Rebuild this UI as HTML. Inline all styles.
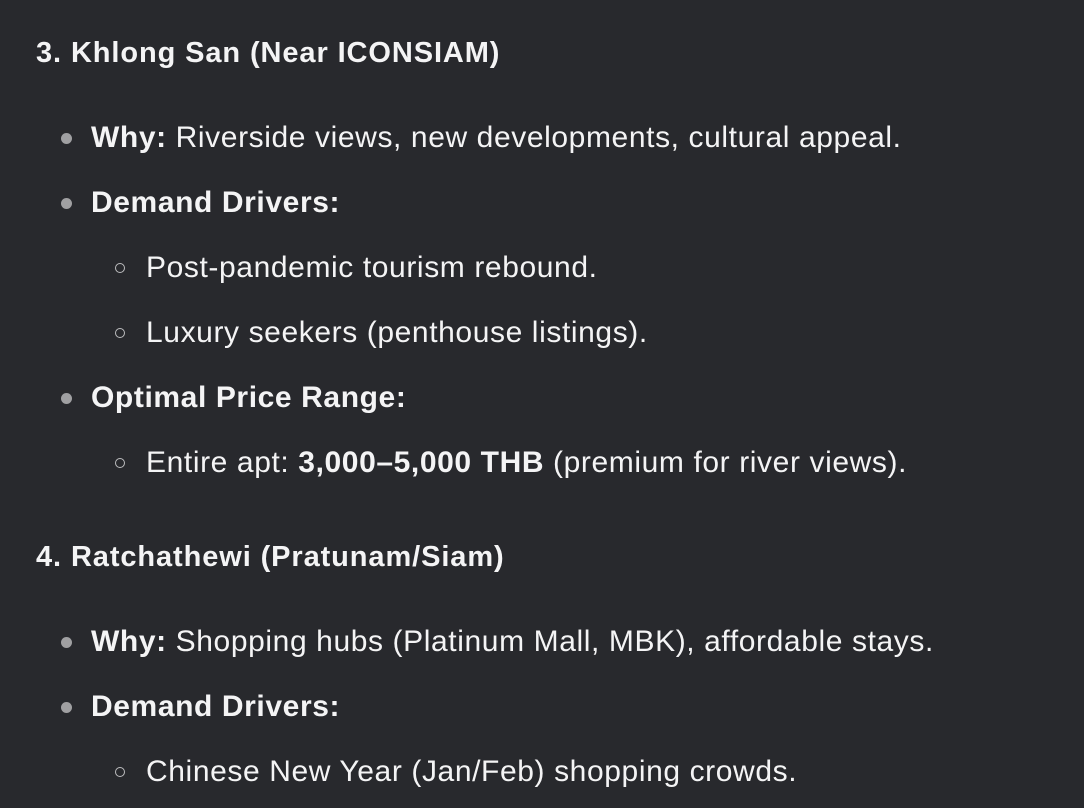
<!DOCTYPE html><html><head><style>
body{margin:0;width:1084px;height:808px;background:#28292d;overflow:hidden;font-family:"Liberation Sans",sans-serif;color:#f4f4f5;font-size:30px;letter-spacing:0.6px}
.l{position:absolute;line-height:40px;white-space:nowrap}
.h{left:36px;font-weight:bold;font-size:29px;letter-spacing:0.9px}
.a{left:91px}
.b{left:146px}
.a::before{content:"";position:absolute;left:-30px;top:15px;width:11px;height:11px;border-radius:50%;background:#a0a0a2}
.b::before{content:"";position:absolute;left:-31px;top:15px;width:8px;height:8px;border-radius:50%;border:1.5px solid #bdbdbf}
b{font-weight:bold}
</style></head><body>
<div class="l h" style="top:33px">3. Khlong San (Near ICONSIAM)</div>
<div class="l a" style="top:118px"><b>Why:</b> Riverside views, new developments, cultural appeal.</div>
<div class="l a" style="top:183px"><b>Demand Drivers:</b></div>
<div class="l b" style="top:248px">Post-pandemic tourism rebound.</div>
<div class="l b" style="top:313px">Luxury seekers (penthouse listings).</div>
<div class="l a" style="top:378px"><b>Optimal Price Range:</b></div>
<div class="l b" style="top:443px">Entire apt: <b>3,000–5,000 THB</b> (premium for river views).</div>
<div class="l h" style="top:537px">4. Ratchathewi (Pratunam/Siam)</div>
<div class="l a" style="top:622px"><b>Why:</b> Shopping hubs (Platinum Mall, MBK), affordable stays.</div>
<div class="l a" style="top:687px"><b>Demand Drivers:</b></div>
<div class="l b" style="top:752px">Chinese New Year (Jan/Feb) shopping crowds.</div>
</body></html>
